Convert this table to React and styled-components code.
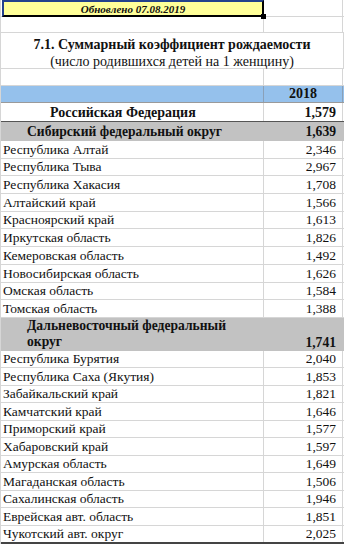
import React from 'react';
import styled, { createGlobalStyle } from 'styled-components';

const siberia = [
  ['Республика Алтай', '2,346'],
  ['Республика Тыва', '2,967'],
  ['Республика Хакасия', '1,708'],
  ['Алтайский край', '1,566'],
  ['Красноярский край', '1,613'],
  ['Иркутская область', '1,826'],
  ['Кемеровская область', '1,492'],
  ['Новосибирская область', '1,626'],
  ['Омская область', '1,584'],
  ['Томская область', '1,388'],
];

const farEast = [
  ['Республика Бурятия', '2,040'],
  ['Республика Саха (Якутия)', '1,853'],
  ['Забайкальский край', '1,821'],
  ['Камчатский край', '1,646'],
  ['Приморский край', '1,577'],
  ['Хабаровский край', '1,597'],
  ['Амурская область', '1,649'],
  ['Магаданская область', '1,506'],
  ['Сахалинская область', '1,946'],
  ['Еврейская авт. область', '1,851'],
  ['Чукотский авт. округ', '2,025'],
];

function App() {
  return (
    <>
      <GlobalStyle />
      <Sheet>
        <Row $h={17}>
          <UpdatedCell>Обновлено 07.08.2019</UpdatedCell>
          <Cell />
        </Row>
        <Row $h={16}>
          <Cell />
          <Cell />
        </Row>
        <TitleBlock>
          <Title>7.1. Суммарный коэффициент рождаемости</Title>
          <Subtitle>(число родившихся детей на 1 женщину)</Subtitle>
        </TitleBlock>
        <Row $h={17}>
          <Cell />
          <Cell />
        </Row>
        <Row $h={17} $bg="#95c1ec" $line="#9a9a9a">
          <Cell $line="#8aa0b8" />
          <Cell $align="center" $bold $size={14} $line="#8aa0b8">2018</Cell>
        </Row>
        <Row $h={19} $line="#555">
          <Cell $bold $size={14} $pl={49}>Российская Федерация</Cell>
          <Cell $bold $size={14} $align="flex-end">1,579</Cell>
        </Row>
        <Row $h={19} $bg="#c2c2c2" $line="#c2c2c2">
          <Cell $bold $size={13.6} $pl={26} $line="transparent">Сибирский федеральный округ</Cell>
          <Cell $bold $size={13.6} $align="flex-end" $line="transparent">1,639</Cell>
        </Row>
        {siberia.map(([name, value]) => (
          <Row key={name} $h={17.7}>
            <Cell>{name}</Cell>
            <Cell $align="flex-end">{value}</Cell>
          </Row>
        ))}
        <Row $h={33} $bg="#c2c2c2" $line="#c2c2c2">
          <Cell $bold $size={13.6} $pl={26} $line="transparent" $wrap>
            Дальневосточный федеральный<br />округ
          </Cell>
          <Cell $bold $size={13.6} $align="flex-end" $line="transparent">1,741</Cell>
        </Row>
        {farEast.map(([name, value], i) => (
          <Row
            key={name}
            $h={i === farEast.length - 1 ? 18 : 17.5}
            $line={i === farEast.length - 1 ? '#444' : undefined}
            $lw={i === farEast.length - 1 ? 2 : 1}
          >
            <Cell>{name}</Cell>
            <Cell $align="flex-end">{value}</Cell>
          </Row>
        ))}
      </Sheet>
    </>
  );
}

const GlobalStyle = createGlobalStyle`
body {
    margin: 0;
    background: #fff;
    font-family: "Liberation Serif", "Times New Roman", serif;
    color: #111;
}
`;

const Sheet = styled.div`
    width: 344px;
    border-left: 1px solid #d6d6d6;
    box-sizing: border-box;
    font-family: "Liberation Serif", "Times New Roman", serif;
`;

const Row = styled.div`
    display: grid;
    grid-template-columns: 263px 79px;
    height: ${p => p.$h}px;
    background: ${p => p.$bg || 'transparent'};
    border-bottom: ${p => p.$lw || 1}px solid ${p => p.$line || '#d6d6d6'};
    box-sizing: border-box;
`;

const Cell = styled.div`
    display: flex;
    align-items: ${p => (p.$wrap ? 'stretch' : 'flex-end')};
    flex-direction: ${p => (p.$wrap ? 'column' : 'row')};
    justify-content: ${p => (p.$wrap ? 'center' : p.$align || 'flex-start')};
    padding: 0 6px 1px ${p => (p.$pl != null ? p.$pl : 2)}px;
    border-right: 1px solid ${p => p.$line || '#d6d6d6'};
    font-size: ${p => p.$size || 13.5}px;
    font-weight: ${p => (p.$bold ? 700 : 400)};
    line-height: ${p => (p.$wrap ? '16px' : '15px')};
    white-space: nowrap;
    ${p => p.$align === 'center' && 'padding: 0 0 1px 0;'}
`;

const UpdatedCell = styled.div`
    position: relative;
    display: flex;
    align-items: center;
    justify-content: center;
    height: 17px;
    margin-left: 1px;
    box-sizing: border-box;
    background: #ffff99;
    border-top: 2px solid #23418c;
    border-left: 2px solid #23418c;
    border-right: 2px solid #000;
    border-bottom: 2px solid #000;
    font-size: 11px;
    font-weight: 700;
    font-style: italic;
    &::after {
        content: '';
        position: absolute;
        right: -4px;
        bottom: -4px;
        width: 5px;
        height: 5px;
        background: #000;
    }
`;

const TitleBlock = styled.div`
    display: flex;
    flex-direction: column;
    align-items: center;
    height: 36px;
    padding-top: 3px;
    box-sizing: border-box;
    border-bottom: 1px solid #d6d6d6;
    border-right: 1px solid #d6d6d6;
`;

const Title = styled.div`
    font-size: 14px;
    font-weight: 700;
    line-height: 17px;
`;

const Subtitle = styled.div`
    font-size: 14px;
    line-height: 17px;
`;

export default App;
